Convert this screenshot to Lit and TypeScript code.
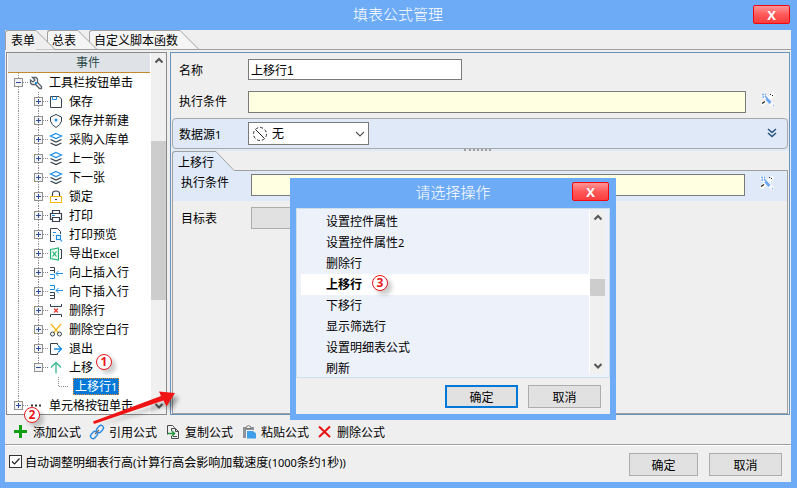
import { LitElement, html, css, svg, nothing } from "lit";
import { customElement, property, state } from "lit/decorators.js";
import { classMap } from "lit/directives/class-map.js";

const DARK = "#36414d";
const BLUE = "#1a8fe8";

const icons: Record<string, unknown> = {
  wrench: svg`<path d="M4.500 2.500H8L9.500 4V7.500L13.500 11.500V13.500H11.500L7.500 9.500H4L2.500 8V5L5 7 7 5Z" fill="#fff" stroke="#56616d" stroke-width="1.300"/><rect x="7" y="7" width="2" height="2" fill="${BLUE}"/>`,
  save: svg`<path d="M2.500 2.500H11L13.500 5V13.500H2.500Z" fill="#fff" stroke="${DARK}"/><path d="M4.500 2.500V5.500H8.500V2.500" fill="none" stroke="${BLUE}"/>`,
  shield: svg`<path d="M8 1.500 13.500 4V8Q12.500 12 8 14.500Q3.500 12 2.500 8V4Z" fill="#fff" stroke="${DARK}"/><circle cx="8" cy="7" r="1.500" fill="${BLUE}"/>`,
  layers: svg`<path d="M8 1.500 13.500 4 8 6.500 2.500 4Z" fill="#fff" stroke="${BLUE}" stroke-width="1.200"/><path d="M2.500 7.500 8 10 13.500 7.500M2.500 11 8 13.500 13.500 11" fill="none" stroke="${DARK}" stroke-width="1.200"/>`,
  lock: svg`<path d="M4.500 8V5Q4.500 2 8 2T11.500 5V8" fill="none" stroke="${DARK}" stroke-width="1.200"/><rect x="2.500" y="7.500" width="11" height="6" fill="#fff" stroke="#f9ba15"/><path d="M7 10.500H9" stroke="${DARK}"/>`,
  print: svg`<path d="M4.500 5.500V2.500H11.500V5.500M4.500 11.500H2.500V5.500H13.500V11.500H11.500M4.500 9.500H11.500V13.500H4.500Z" fill="none" stroke="${DARK}" stroke-width="1.200"/><path d="M4 7.500H7" stroke="${BLUE}"/>`,
  preview: svg`<path d="M7 14.500H2.500V1.500H9.500L12.500 4.500V7" fill="none" stroke="${DARK}"/><path d="M5 5.500H8M5 8.500H6" stroke="${BLUE}"/><rect x="8.500" y="8.500" width="4" height="4" fill="none" stroke="${BLUE}" stroke-width="1.200"/><path d="M12 12 14 14.500" stroke="${BLUE}" stroke-width="1.200"/>`,
  excel: svg`<path d="M2.500 3.500 10.500 2V14L2.500 12.500Z" fill="#eefaf3" stroke="#21b573" stroke-width="1.200"/><path d="M4.500 5.500 8.500 10.500M8.500 5.500 4.500 10.500" stroke="#21b573" stroke-width="1.200"/><path d="M12 3.500H13.500V12.500H12" fill="none" stroke="${DARK}"/>`,
  insertUp: svg`<path d="M2 2.500H6.500V8M2 5.500H6" fill="none" stroke="${DARK}"/><path d="M2 9.500H6.500V13.500H2" fill="none" stroke="${BLUE}"/><path d="M15 8.500H8M10.500 6 8 8.500 10.500 11" fill="none" stroke="${BLUE}"/>`,
  insertDown: svg`<path d="M2 1.500H6.500V5.500H2" fill="none" stroke="${BLUE}"/><path d="M2 8.500H6.500V14.500H2M2 11.500H6" fill="none" stroke="${DARK}"/><path d="M15 6.500H8M10.500 4 8 6.500 10.500 9" fill="none" stroke="${BLUE}"/>`,
  removeRow: svg`<path d="M2.500 1V3.500H13.500V1M2.500 14V11.500H13.500V14" fill="none" stroke="${DARK}"/><path d="M6 5.500 10 9.500M10 5.500 6 9.500" stroke="#e8352c" stroke-width="1.200"/>`,
  scissors: svg`<path d="M3 2 10.500 11M13 2 5.500 11" stroke="#f9ba15" stroke-width="1.200"/><circle cx="4.500" cy="12" r="2" fill="none" stroke="${DARK}"/><circle cx="11.500" cy="12" r="2" fill="none" stroke="${DARK}"/>`,
  exit: svg`<path d="M9.500 4V2.500H2.500V13.500H9.500V12" fill="none" stroke="${DARK}"/><path d="M6 8H13M10 4.500 13.500 8 10 11.500" fill="none" stroke="${BLUE}" stroke-width="1.300"/>`,
  up: svg`<path d="M8 13.500V3M3 7.500 8 2.500 13 7.500" fill="none" stroke="#3cb88a" stroke-width="1.300"/>`,
  dots: svg`<path d="M3 7.500H5M7 7.500H9M11 7.500H13" stroke="#333" stroke-width="2"/>`,
  plus: svg`<path d="M7.500 1V14M1 7.500H14" stroke="#12a012" stroke-width="3"/>`,
  link: svg`<g fill="none" stroke="#2b8ae0" stroke-width="1.300"><rect x="-4" y="-2.500" width="8" height="5" rx="2.500" transform="translate(5 11) rotate(-50)"/><rect x="-4" y="-2.500" width="8" height="5" rx="2.500" transform="translate(11 5) rotate(-50)"/><path d="M6 10 10 6" stroke="#6b7480"/></g>`,
  copy: svg`<path d="M2.500 10.500V1.500H7.500L9.500 3.500" fill="none" stroke="#4a4a4a"/><path d="M6.500 7V4.500H10.500L13.500 7.500V14.500H6.500V12M10.500 4.500V7.500H13.500M8 12.500H12" fill="none" stroke="#4a4a4a"/><path d="M3 9.500H9M7 7 9.500 9.500 7 12" fill="none" stroke="#22943a" stroke-width="1.500"/>`,
  paste: svg`<path d="M2 3H13V6H5V14H2Z" fill="#909498"/><path d="M5 3Q7.500 0 10 3V4.500H5Z" fill="#efefef" stroke="#777"/><path d="M6 7H12L15 9.500V14.500H6Z" fill="#3f9fe8"/>`,
  cross: svg`<path d="M2 2.500 13 13M13 2.500 2 13" stroke="#e81212" stroke-width="2"/>`,
  tools: svg`<path d="M3 3 13 13M13 3 3 12" stroke="#fafafa" stroke-width="4" stroke-linecap="round"/><path d="M2 2.500H4M5 2.500H6M2.500 5H4M5 4 11 10.500M6 7 10 11.500M13 13.500H14" stroke="#6ba6f5" stroke-width="1.500" fill="none"/><path d="M10 2.500H11M12 3.500H13M2 11.500 5 9.500" stroke="#222" stroke-width="1.200"/>`,
  none: svg`<circle cx="8" cy="8" r="6.500" fill="none" stroke="#333" stroke-dasharray="3 2"/><path d="M3.500 3.500 12.500 12.500" stroke="#222"/>`,
  arrowUp: svg`<path d="M4.500 9.500 8 6 11.500 9.500" fill="none" stroke="#555" stroke-width="2"/>`,
  arrowDown: svg`<path d="M4.500 6 8 9.500 11.500 6" fill="none" stroke="#555" stroke-width="2"/>`,
  chevron: svg`<path d="M4 6 8 10 12 6" fill="none" stroke="#555" stroke-width="1.200"/>`,
  more: svg`<path d="M4 3 8 6.500 12 3M4 7 8 10.500 12 7" fill="none" stroke="#28517f" stroke-width="1.500"/>`,
};

const icon = (name: string) =>
  html`<svg class="icon" width="16" height="16" viewBox="0 0 16 16" aria-hidden="true">${icons[name]}</svg>`;

/* Latin runs are set one step smaller than the Chinese text around them. */
const mixed = (text: string) =>
  text.split(/([\x21-\x7e]+)/).map((part, i) => (i % 2 ? html`<span class="latin">${part}</span>` : part));

const shared = css`
  * { box-sizing: border-box; }
  .icon { display: block; flex: none; }
  .latin { font-family: "Noto Sans", sans-serif; font-size: 11px; line-height: 1; }
  button, input, select { font: inherit; color: inherit; margin: 0; border-radius: 0; }
  .push {
    height: 23px; width: 73px; padding: 0;
    border: 1px solid #adadad; background: #e1e1e1; color: #000;
  }
  .push.default { border: 2px solid #0078d7; }
  .close {
    width: 37px; height: 19px; padding: 0;
    border: 1px solid #f00810; border-radius: 2px;
    background: linear-gradient(#ff9494, #ff5a5a 50%, #fb3c3c);
    color: #fff; font: bold 13px/16px "Open Sans", "Noto Sans", sans-serif;
  }
  .titlebar {
    display: grid; grid-template-columns: 1fr auto 1fr; height: 30px; flex: none;
    color: #fff; background: #6dabf7;
  }
  .titlebar h1, .titlebar h2 {
    grid-column: 2; margin: 0; font-size: 15px; font-weight: 300; line-height: 30px;
  }
  .titlebar .close { grid-column: 3; justify-self: end; }
  .scroll {
    display: flex; flex-direction: column; align-items: center; flex: none;
    width: 15px; background: #f0f0f0;
  }
  .thumb { width: 15px; background: #cdcdcd; }
  .badge {
    position: absolute; width: 16px; height: 16px; border: 1px solid #e8141c; border-radius: 50%;
    color: #e8141c; background: #fff; text-align: center;
    font: bold 12px/14px "Open Sans", "Noto Sans", sans-serif;
    box-shadow: 4px 4px 4px rgba(0, 0, 0, 0.2);
  }
`;

interface Node { label: string; icon?: string; level: number; sign?: string; last?: boolean; selected?: boolean; badge?: string; }

const nodes: Node[] = [
  { label: "工具栏按钮单击", icon: "wrench", level: 0, sign: "-" },
  { label: "保存", icon: "save", level: 1, sign: "+" },
  { label: "保存并新建", icon: "shield", level: 1, sign: "+" },
  { label: "采购入库单", icon: "layers", level: 1, sign: "+" },
  { label: "上一张", icon: "layers", level: 1, sign: "+" },
  { label: "下一张", icon: "layers", level: 1, sign: "+" },
  { label: "锁定", icon: "lock", level: 1, sign: "+" },
  { label: "打印", icon: "print", level: 1, sign: "+" },
  { label: "打印预览", icon: "preview", level: 1, sign: "+" },
  { label: "导出Excel", icon: "excel", level: 1, sign: "+" },
  { label: "向上插入行", icon: "insertUp", level: 1, sign: "+" },
  { label: "向下插入行", icon: "insertDown", level: 1, sign: "+" },
  { label: "删除行", icon: "removeRow", level: 1, sign: "+" },
  { label: "删除空白行", icon: "scissors", level: 1, sign: "+" },
  { label: "退出", icon: "exit", level: 1, sign: "+" },
  { label: "上移", icon: "up", level: 1, sign: "-", last: true, badge: "1" },
  { label: "上移行1", level: 2, last: true, selected: true },
  { label: "单元格按钮单击", icon: "dots", level: 0, sign: "+", last: true },
];

@customElement("event-tree")
export class EventTree extends LitElement {
  static styles = [shared, css`
    :host { display: flex; width: 161px; flex: none; border: 1px solid #8a8a8a; background: #fff; overflow: hidden; }
    .main { flex: 1; min-width: 0; padding-left: 1px; }
    .head {
      height: 20px; border-bottom: 1px solid #c48a28; background: #dfe3e8; color: #2c4a48;
      text-align: center; line-height: 20px; margin-right: 1px; padding-left: 18px;
    }
    ul { list-style: none; margin: 0; padding: 0; }
    li { display: flex; align-items: center; height: 19px; position: relative; white-space: nowrap; }
    .cell { display: block; flex: none; }
    .label { margin-left: 5px; padding-top: 2px; line-height: 17px; }
    .selected { background: #0078d7; color: #fff; outline: 1px dotted #e8872e; outline-offset: -1px; line-height: 16px; padding: 1px 2px 0; }
    .badge { left: 88px; top: -4px; }
    .track { flex: 1; min-height: 0; }
    .above { height: 72px; }
    .thumb { height: 159px; }
  `];

  private cell(node: Node, depth: number) {
    const own = depth === node.level;
    const through = own ? !node.last : depth === 0;
    return html`<svg class="cell" width="20" height="19" aria-hidden="true">
      ${through || own ? svg`<path d="M10.500 0V${through ? 19 : 9}" stroke="#909090" stroke-dasharray="1 1"/>` : nothing}
      ${own ? svg`<path d="M11 9.500H20" stroke="#909090" stroke-dasharray="1 1"/>` : nothing}
      ${own && node.sign ? svg`<rect x="6.500" y="5.500" width="8" height="8" fill="#f4f4f4" stroke="#919191"/><path d="M8 9.500H13${node.sign === "+" ? "M10.500 7V12" : ""}" stroke="#2b4c9b"/>` : nothing}
    </svg>`;
  }

  render() {
    return html`
      <div class="main">
        <div class="head">事件</div>
        <ul role="tree">
          ${nodes.map((n) => html`<li role="treeitem" aria-selected=${n.selected ? "true" : "false"}>
            ${Array.from({ length: n.level + 1 }, (_, d) => this.cell(n, d))}
            ${n.icon ? icon(n.icon) : nothing}
            <span class=${classMap({ label: true, selected: !!n.selected })}>${mixed(n.label)}</span>
            ${n.badge ? html`<span class="badge">${n.badge}</span>` : nothing}
          </li>`)}
        </ul>
      </div>
      <div class="scroll">
        ${icon("arrowUp")}
        <div class="track"><div class="above"></div><div class="thumb"></div></div>
        ${icon("arrowDown")}
      </div>`;
  }
}

@customElement("action-dialog")
export class ActionDialog extends LitElement {
  @state() private chosen = 3;
  private items = ["设置控件属性", "设置控件属性2", "删除行", "上移行", "下移行", "显示筛选行", "设置明细表公式", "刷新"];

  static styles = [shared, css`
    :host { display: flex; flex-direction: column; width: 326px; border: solid #6dabf7; border-width: 0 6px 6px; background: #efefef; }
    .close { margin-top: 4px; margin-right: 1px; }
    .list { display: flex; height: 170px; border: 1px solid #cfdfea; background: #edf1fa; padding: 1px 4px 3px; }
    ul { list-style: none; margin: 0; padding: 1px 0 0; flex: 1; }
    li { height: 21px; line-height: 23px; padding-left: 25px; position: relative; }
    li.on { background: #fff; font-weight: bold; }
    .badge { left: 71px; top: 1px; }
    .scroll { border-left: 1px solid #fff; width: 16px; }
    .track { flex: 1; }
    .above { height: 53px; }
    .thumb { height: 17px; }
    .buttons { display: flex; justify-content: flex-end; gap: 10px; padding: 7px 9px 6px; }
  `];

  render() {
    return html`
      <div class="titlebar"><h2>请选择操作</h2><button class="close" aria-label="关闭">X</button></div>
      <div class="list">
        <ul role="listbox">
          ${this.items.map((t, i) => html`<li role="option" class=${classMap({ on: i === this.chosen })} @click=${() => (this.chosen = i)}>
            ${mixed(t)}${i === 3 ? html`<span class="badge">3</span>` : nothing}</li>`)}
        </ul>
        <div class="scroll">
          ${icon("arrowUp")}
          <div class="track"><div class="above"></div><div class="thumb"></div></div>
          ${icon("arrowDown")}
        </div>
      </div>
      <div class="buttons"><button class="push default">确定</button><button class="push">取消</button></div>`;
  }
}

@customElement("formula-form")
export class FormulaForm extends LitElement {
  static styles = [shared, css`
    :host { display: flex; flex-direction: column; flex: 1; min-width: 0; border: 1px solid #6a93bb; padding: 0 1px; }
    .row { display: grid; grid-template-columns: 69px minmax(0, 1fr) 42px; align-items: center; padding-left: 7px; height: 32px; }
    .first { height: 33px; }
    .raised > label, .raised > .tool { padding-bottom: 4px; box-sizing: content-box; }
    .field { height: 22px; width: 100%; border: 1px solid #7a7a7a; background: #fff; padding: 0 2px; }
    .name { width: 214px; height: 21px; }
    .cond { background: #ffffe1; }
    .tool { width: 16px; height: 16px; border: 0; padding: 0; background: none; justify-self: end; margin-right: 12px; }
    .band { background: #dfe9f7; padding-bottom: 2px; margin-right: -1px; }
    .group { border: 1px solid #a8a8a8; border-radius: 4px; margin: 0 1px 0 0; height: 31px; padding-left: 6px; }
    .group .tool { margin-right: 7px; }
    .combo { display: grid; width: 121px; height: 23px; align-items: center; }
    .combo > * { grid-area: 1 / 1; }
    .combo select { height: 23px; width: 100%; appearance: none; border: 1px solid #7a7a7a; background: #fff; padding: 0 20px 0 23px; }
    .combo .icon { pointer-events: none; z-index: 1; margin-left: 4px; }
    .combo .icon:last-child { justify-self: end; margin-right: 1px; }
    .tabs { display: flex; height: 20px; align-items: stretch; position: relative; }
    .tab { border: solid #a0a0a0; border-width: 1px 0 0 1px; border-top-left-radius: 3px; background: #dfe9f7; padding: 3px 0 0 5px; width: 44px; text-align: left; line-height: 16px; }
    .slant { display: block; flex: none; }
    .rest { flex: 1; border-bottom: 1px solid #a0a0a0; }
    .grip { position: absolute; left: 50%; top: -2px; width: 27px; border-top: 2px dotted #a0a0a0; margin-left: -16px; }
    .page { flex: 1; border: solid #a0a0a0; border-width: 0 1px 1px; }
    .page .row { grid-template-columns: 70px minmax(0, 1fr) 42px; padding-left: 8px; }
    .page .blue { background: #dfe9f7; height: 30px; padding-bottom: 2px; }
    .page .blue label { padding-bottom: 8px; }
    .page .target { height: 33px; }
    .target button { width: 300px; height: 22px; border: 1px solid #adadad; background: #e1e1e1; }
  `];

  render() {
    return html`
      <div class="row first"><label for="name">名称</label><input id="name" class="field name" value="上移行1"></div>
      <div class="row raised"><label for="cond">执行条件</label><input id="cond" class="field cond"><button class="tool" aria-label="编辑">${icon("tools")}</button></div>
      <div class="band"><div class="row group">
        <label for="src">数据源${mixed("1")}</label>
        <div class="combo">${icon("none")}<select id="src"><option>无</option></select>${icon("chevron")}</div>
        <button class="tool" aria-label="展开">${icon("more")}</button>
      </div></div>
      <div class="tabs">
        <button class="tab">上移行</button>
        <svg class="slant" width="18" height="20" aria-hidden="true"><path d="M0 .500 17.500 19.500V20H0Z" fill="#dfe9f7"/><path d="M0 .500 18 19.500" fill="none" stroke="#a0a0a0"/></svg>
        <div class="rest"></div>
        <div class="grip"></div>
      </div>
      <div class="page">
        <div class="row blue raised"><label for="cond2">执行条件</label><input id="cond2" class="field cond"><button class="tool" aria-label="编辑">${icon("tools")}</button></div>
        <div class="row target"><label for="target">目标表</label><button id="target"></button></div>
      </div>`;
  }
}

@customElement("app-root")
export class AppRoot extends LitElement {
  @property({ type: Number }) tab = 0;
  private tabs = ["表单", "总表", "自定义脚本函数"];
  private tools = [["plus", "添加公式"], ["link", "引用公式"], ["copy", "复制公式"], ["paste", "粘贴公式"], ["cross", "删除公式"]];

  static styles = [shared, css`
    :host {
      display: flex; flex-direction: column; height: 100vh; min-height: 420px; box-sizing: border-box; position: relative;
      border: solid #6dabf7; border-width: 0 6px 6px 5px; background: #efefef; color: #000;
      font-family: "Liberation Sans", "Noto Sans CJK SC", sans-serif; font-size: 12px;
    }
    .close { margin-top: 5px; margin-right: 1px; }
    .tabs { display: flex; height: 20px; flex: none; box-shadow: inset 0 -1px #a0a0a0; }
    .tab { display: flex; border: 0; padding: 0; background: none; position: relative; margin-left: -8px; }
    .tab:first-child { margin-left: 0; z-index: 2; }
    .tab:nth-child(2) { z-index: 1; }
    .text { height: 19px; line-height: 21px; padding: 0 2px 0 4px; background: #f5f5f5; border: solid #a0a0a0; border-width: 1px 0 0 1px; border-top-left-radius: 3px; }
    .tab.on .text { height: 20px; padding: 0 1px 0 5px; background: #efefef; }
    .slant { display: block; }
    .body { display: flex; flex: 1; min-height: 0; gap: 3px; padding: 2px 1px 0; }
    .toolbar { display: flex; gap: 8px; height: 29px; flex: none; padding-left: 8px; align-items: center; position: relative; }
    .command { display: flex; align-items: center; gap: 4px; border: 0; padding: 4px 0 0; background: none; white-space: nowrap; }
    .badge { left: 19px; top: -8px; }
    .arrow { position: absolute; left: 80px; top: -31px; overflow: visible; pointer-events: none; }
    .shade { filter: blur(2px); }
    .footer { display: flex; align-items: flex-start; gap: 11px; height: 38px; flex: none; border-top: 1px solid #a0a0a0; box-shadow: inset 0 1px #fff; padding: 8px 9px 0 4px; }
    .check { display: flex; align-items: center; gap: 3px; flex: 1; white-space: nowrap; height: 17px; }
    .check input { appearance: none; width: 13px; height: 13px; border: 1px solid #333; background: #fff; }
    .box { display: grid; }
    .box > * { grid-area: 1 / 1; }
    .box svg { pointer-events: none; }
    .ok { width: 69px; }
    action-dialog { position: absolute; left: 285px; top: 178px; }
  `];

  render() {
    return html`
      <header class="titlebar"><h1>填表公式管理</h1><button class="close" aria-label="关闭">X</button></header>
      <nav class="tabs">
        ${this.tabs.map((t, i) => {
          const on = i === this.tab;
          return html`<button class=${classMap({ tab: true, on })} @click=${() => (this.tab = i)}>
            <span class="text">${t}</span><svg class="slant" width="19" height="20" aria-hidden="true">
              <path d="M0 .500 19 19.500H0Z" fill=${on ? "#efefef" : "#f5f5f5"}/><path d="M0 .500 19 19.500${on ? "" : "H0"}" fill="none" stroke="#a0a0a0"/></svg></button>`;
        })}
      </nav>
      <main class="body"><event-tree></event-tree><formula-form></formula-form></main>
      <div class="toolbar">
        ${this.tools.map(([name, label]) => html`<button class="command">${icon(name)}<span>${label}</span></button>`)}
        <span class="badge">2</span>
        <svg class="arrow" width="96" height="42" aria-hidden="true">
          <path class="shade" d="M12 42 83 17 80 12 94 13 86 27 83 21Z" fill="#000" opacity=".35"/>
          <path d="M8 37.500 76 12 74 7.500 90 9 81.500 22.500 78.500 16.500 9 40Z" fill="#f01414"/>
        </svg>
      </div>
      <footer class="footer">
        <label class="check"><span class="box"><input type="checkbox" checked><svg width="13" height="13" aria-hidden="true"><path d="M3 6.500 5.500 9 10.500 3.500" fill="none" stroke="#222" stroke-width="1.200"/></svg></span>
          <span>${mixed("自动调整明细表行高(计算行高会影响加载速度(1000条约1秒))")}</span></label>
        <button class="push ok">确定</button><button class="push">取消</button>
      </footer>
      <action-dialog></action-dialog>`;
  }
}
